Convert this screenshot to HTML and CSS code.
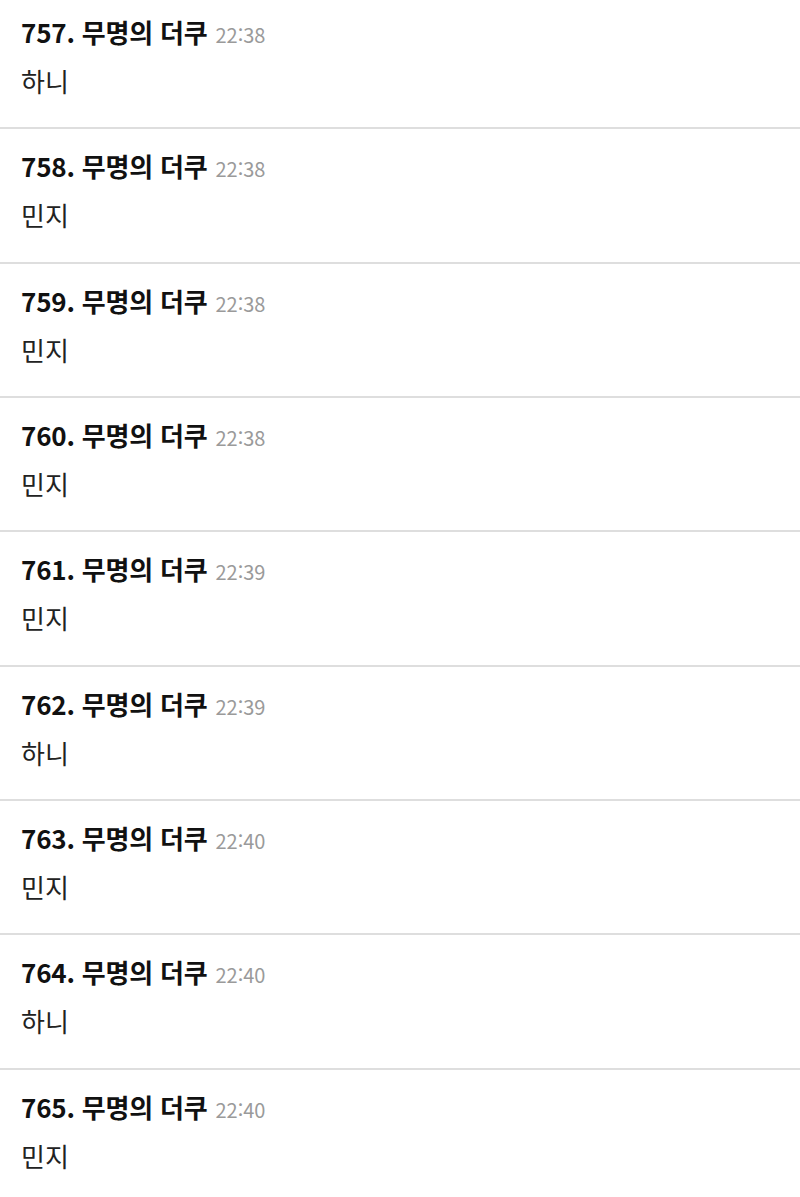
FILE: index.html
```html
<!DOCTYPE html>
<html lang="ko">
<head>
<meta charset="utf-8">
<link rel="stylesheet" href="styles.css">
</head>
<body>
<div class="list">
  <div class="row"><div class="head"><span class="name">757. 무명의 더쿠</span><span class="time">22:38</span></div><div class="body">하니</div></div>
  <div class="row"><div class="head"><span class="name">758. 무명의 더쿠</span><span class="time">22:38</span></div><div class="body">민지</div></div>
  <div class="row"><div class="head"><span class="name">759. 무명의 더쿠</span><span class="time">22:38</span></div><div class="body">민지</div></div>
  <div class="row"><div class="head"><span class="name">760. 무명의 더쿠</span><span class="time">22:38</span></div><div class="body">민지</div></div>
  <div class="row"><div class="head"><span class="name">761. 무명의 더쿠</span><span class="time">22:39</span></div><div class="body">민지</div></div>
  <div class="row"><div class="head"><span class="name">762. 무명의 더쿠</span><span class="time">22:39</span></div><div class="body">하니</div></div>
  <div class="row"><div class="head"><span class="name">763. 무명의 더쿠</span><span class="time">22:40</span></div><div class="body">민지</div></div>
  <div class="row"><div class="head"><span class="name">764. 무명의 더쿠</span><span class="time">22:40</span></div><div class="body">하니</div></div>
  <div class="row"><div class="head"><span class="name">765. 무명의 더쿠</span><span class="time">22:40</span></div><div class="body">민지</div></div>
</div>
</body>
</html>
```
FILE: styles.css
```css
html, body {
  margin: 0;
  padding: 0;
  background: #ffffff;
}
body {
  font-family: "Noto Sans CJK KR", "Noto Sans", sans-serif;
  color: #111111;
}
.list {
  display: flex;
  flex-direction: column;
  margin-top: -5px;
}
.row {
  box-sizing: border-box;
  height: 134.35px;
  padding: 19px 21px 0;
  border-bottom: 2px solid #dedede;
  flex-shrink: 0;
}
.head {
  display: flex;
  align-items: baseline;
  line-height: 36px;
}
.name {
  font-size: 26px;
  font-weight: 700;
  letter-spacing: -0.2px;
}
.time {
  font-size: 20px;
  color: #9a9a9a;
  margin-left: 8px;
}
.body {
  margin-top: 10px;
  font-size: 26px;
  line-height: 36px;
  color: #222222;
}
```
